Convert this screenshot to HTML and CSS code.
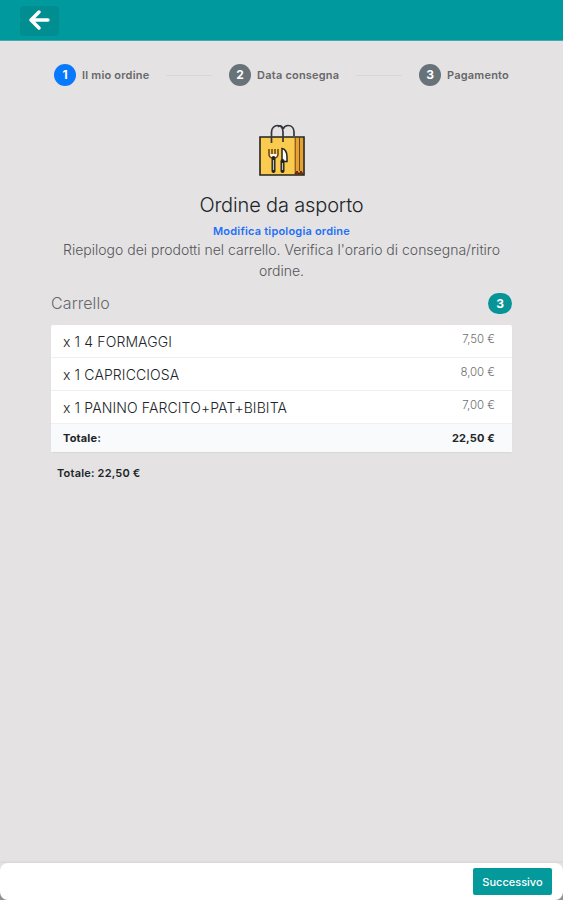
FILE: index.html
```html
<!DOCTYPE html>
<html lang="it">
<head>
    <meta charset="UTF-8">
    <meta name="viewport" content="width=device-width, initial-scale=1.0">
    <title>Il mio ordine</title>
    <link rel="stylesheet" href="styles.css">
</head>
<body>
    <header class="navbar">
        <button class="back" aria-label="Indietro">
            <svg width="22" height="20" viewBox="0 0 22 20">
                <path d="M20 10H3M11 2L3 10l8 8" fill="none" stroke="#fff" stroke-width="3.4" stroke-linecap="round" stroke-linejoin="round"/>
            </svg>
        </button>
    </header>

    <main class="content">
        <!-- Stepper -->
        <div class="stepper">
            <div class="step active"><span class="circle">1</span><span class="label">Il mio ordine</span></div>
            <div class="line"></div>
            <div class="step"><span class="circle">2</span><span class="label">Data consegna</span></div>
            <div class="line"></div>
            <div class="step"><span class="circle">3</span><span class="label">Pagamento</span></div>
        </div>

        <div class="intro">
            <svg class="bag" width="48" height="54" viewBox="0 0 48 54">
                <path d="M2 14h44v38H2z" fill="#fbcb50" stroke="#25231f" stroke-width="1.6"/>
                <path d="M37 15h8v36h-8z" fill="#e5a234"/>
                <path d="M37.200 14v37M41.500 15v33" fill="none" stroke="#70430f" stroke-width="1"/>
                <path d="M37 51l2-3 2 3 2-3 2 3z" fill="#a33d10" stroke="#4b240f"/>
                <path d="M13.500 20V9c0-4 3-6.500 6-6.500S25 5 25 9v10" fill="none" stroke="#33373c" stroke-width="1.700"/>
                <path d="M20 4c2-2 3-1.500 5 1M25 6c1-2 3-3.500 5-3.500 4 0 6 3 6 6.500v4" fill="none" stroke="#33373c" stroke-width="1.700"/>
                <path d="M11 26v5c0 3 2 4 4.500 4s4.500-1 4.500-4v-5M14 26v6M17 26v6" fill="none" stroke="#6e491c" stroke-width="1.600"/>
                <path d="M12 31h7l-1 3h-5z" fill="#fff"/>
                <path d="M15.500 35v13" stroke="#25231f" stroke-width="4" stroke-linecap="round"/>
                <path d="M15.500 37v10" stroke="#b9bdc0" stroke-width="1.200"/>
                <path d="M24 25.500c3 0 5 4 5 8v5h-5z" fill="#fff" stroke="#25231f" stroke-width="1.500"/>
                <path d="M24.500 38v10" stroke="#25231f" stroke-width="4" stroke-linecap="round"/>
                <path d="M24.500 40v7" stroke="#b9bdc0" stroke-width="1.200"/>
            </svg>
            <h2>Ordine da asporto</h2>
            <a class="edit-type">Modifica tipologia ordine</a>
            <p>Riepilogo dei prodotti nel carrello. Verifica l'orario di consegna/ritiro<br>ordine.</p>
        </div>

        <!-- Cart -->
        <div class="cart-title">
            <h4>Carrello</h4>
            <span class="badge">3</span>
        </div>
        <ul class="cart">
            <li><span class="name">x 1 4 FORMAGGI</span><span class="price">7,50 €</span></li>
            <li><span class="name">x 1 CAPRICCIOSA</span><span class="price">8,00 €</span></li>
            <li><span class="name">x 1 PANINO FARCITO+PAT+BIBITA</span><span class="price">7,00 €</span></li>
            <li class="total"><b>Totale:</b><b>22,50 €</b></li>
        </ul>
        <p class="grand-total">Totale: 22,50 €</p>
    </main>

    <footer class="footer-wrap">
        <div class="footer">
            <button class="next">Successivo</button>
        </div>
    </footer>
</body>
</html>
```
FILE: styles.css
```css
* {
    margin: 0;
    padding: 0;
    box-sizing: border-box;
}

body {
    display: flex;
    flex-direction: column;
    height: 100vh;
    overflow: hidden;
    background: #e4e2e3;
    color: #212529;
    font-family: 'Inter', sans-serif;
    font-size: 14px;
}

button {
    border: none;
    font-family: inherit;
}

.navbar {
    height: 41px;
    padding: 6px 20px;
    background: #009a9e;
    border-bottom: 1px solid #43abad;
}

.back {
    display: flex;
    align-items: center;
    justify-content: center;
    width: 39px;
    height: 30px;
    padding: 0 2px 3px 0;
    border-radius: 4px;
    background: #008e91;
}

.content {
    flex: 1;
    padding: 23px 51px 0;
}

/* Stepper */
.stepper {
    display: flex;
    justify-content: space-between;
    align-items: center;
    height: 22px;
    padding: 0 3px;
}

.step {
    display: flex;
    align-items: center;
    gap: 6px;
}

.circle {
    width: 22px;
    height: 22px;
    border-radius: 50%;
    background: #687279;
    color: #fff;
    font-size: 12px;
    font-weight: 700;
    line-height: 22px;
    text-align: center;
}

.active .circle {
    background: #0878fc;
}

.label {
    color: #67686a;
    font-size: 11px;
    font-weight: 600;
    letter-spacing: 0.2px;
    white-space: nowrap;
}

.line {
    width: 46px;
    height: 1px;
    background: #d9d8d9;
}

.intro {
    text-align: center;
}

.bag {
    display: block;
    margin: 37px auto 0;
}

.intro h2 {
    margin-top: 15px;
    font-size: 20px;
    font-weight: 300;
    letter-spacing: -0.15px;
    line-height: 26px;
}

.edit-type {
    display: block;
    margin-top: 6px;
    color: #1f70f5;
    font-size: 11px;
    font-weight: 600;
    letter-spacing: 0.2px;
    line-height: 14px;
}

.intro p {
    margin-top: 1px;
    color: #54565a;
    font-size: 14px;
    font-weight: 300;
    line-height: 21px;
    white-space: nowrap;
}

/* Cart */
.cart-title {
    display: flex;
    justify-content: space-between;
    align-items: center;
    height: 22px;
    margin-top: 11px;
}

.cart-title h4 {
    color: #65686c;
    font-size: 16px;
    font-weight: 300;
    letter-spacing: 0.1px;
}

.badge {
    width: 24px;
    height: 21px;
    border-radius: 11px;
    background: #079497;
    color: #fff;
    font-size: 12px;
    font-weight: 700;
    line-height: 21px;
    text-align: center;
}

.cart {
    margin-top: 11px;
    border-radius: 2px;
    background: #fff;
    list-style: none;
    box-shadow: 0 1px 1px #d8d7d8;
}

.cart li {
    display: flex;
    justify-content: space-between;
    height: 33px;
    padding: 0 17px 0 12px;
    border-bottom: 1px solid #f0f0f1;
    line-height: 33px;
}

.name {
    font-size: 14px;
    font-weight: 300;
    letter-spacing: 0.12px;
}

.cart .price {
    color: #6c6f72;
    font-size: 11.4px;
    font-weight: 300;
    line-height: 29px;
}

.cart .total {
    height: 28px;
    border-bottom: none;
    background: #f8fafb;
    font-size: 11px;
    letter-spacing: 0.15px;
    line-height: 29px;
}

.grand-total {
    padding: 13px 6px 0;
    font-size: 11px;
    font-weight: 600;
    letter-spacing: 0.2px;
    line-height: 16px;
}

.footer-wrap {
    background: linear-gradient(#e4e2e3 50%, #929192 50%);
    box-shadow: 0 -1px 2px #d6d4d5;
}

.footer {
    display: flex;
    justify-content: flex-end;
    height: 37px;
    padding: 5px 11px;
    border-radius: 8px;
    background: #fff;
}

.next {
    width: 79px;
    height: 27px;
    border-radius: 2px;
    background: #04999b;
    color: #fff;
    font-size: 11px;
    font-weight: 500;
}
```
